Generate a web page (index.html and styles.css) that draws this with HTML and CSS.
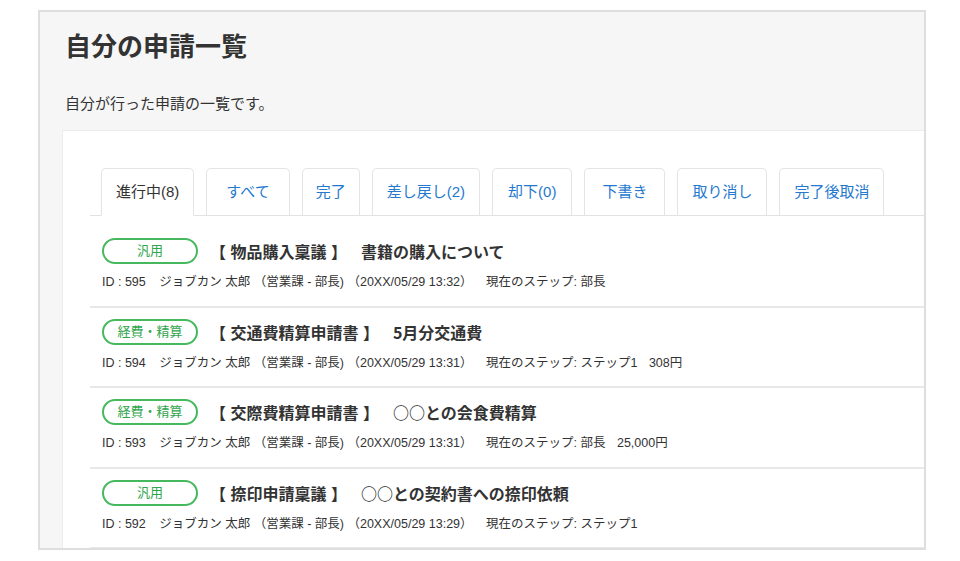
FILE: index.html
```html
<!DOCTYPE html>
<html lang="ja">
<head>
    <meta charset="UTF-8">
    <meta name="viewport" content="width=device-width, initial-scale=1.0">
    <title>自分の申請一覧</title>
    <link rel="stylesheet" href="styles.css">
</head>
<body>
    <div class="frame">
        <h1>自分の申請一覧</h1>
        <p class="lead">自分が行った申請の一覧です。</p>

        <div class="panel">
            <ul class="tabs">
                <li class="tab active">進行中(8)</li>
                <li class="tab">すべて</li>
                <li class="tab">完了</li>
                <li class="tab">差し戻し(2)</li>
                <li class="tab">却下(0)</li>
                <li class="tab">下書き</li>
                <li class="tab">取り消し</li>
                <li class="tab">完了後取消</li>
            </ul>

            <ul class="requests">
                <li class="request">
                    <div class="request-head">
                        <span class="badge">汎用</span>
                        <span class="form-name">【 物品購入稟議 】</span>
                        <span class="subject">書籍の購入について</span>
                    </div>
                    <div class="meta">
                        <span class="id">ID : 595</span>
                        <span>ジョブカン 太郎 （営業課 - 部長) （20XX/05/29 13:32）</span>
                        <span class="step">現在のステップ: 部長</span>
                    </div>
                </li>
                <li class="request">
                    <div class="request-head">
                        <span class="badge">経費・精算</span>
                        <span class="form-name">【 交通費精算申請書 】</span>
                        <span class="subject">5月分交通費</span>
                    </div>
                    <div class="meta">
                        <span class="id">ID : 594</span>
                        <span>ジョブカン 太郎 （営業課 - 部長) （20XX/05/29 13:31）</span>
                        <span class="step">現在のステップ: ステップ1</span>
                        <span class="amount">308円</span>
                    </div>
                </li>
                <li class="request">
                    <div class="request-head">
                        <span class="badge">経費・精算</span>
                        <span class="form-name">【 交際費精算申請書 】</span>
                        <span class="subject">○○との会食費精算</span>
                    </div>
                    <div class="meta">
                        <span class="id">ID : 593</span>
                        <span>ジョブカン 太郎 （営業課 - 部長) （20XX/05/29 13:31）</span>
                        <span class="step">現在のステップ: 部長</span>
                        <span class="amount">25,000円</span>
                    </div>
                </li>
                <li class="request">
                    <div class="request-head">
                        <span class="badge">汎用</span>
                        <span class="form-name">【 捺印申請稟議 】</span>
                        <span class="subject">○○との契約書への捺印依頼</span>
                    </div>
                    <div class="meta">
                        <span class="id">ID : 592</span>
                        <span>ジョブカン 太郎 （営業課 - 部長) （20XX/05/29 13:29）</span>
                        <span class="step">現在のステップ: ステップ1</span>
                    </div>
                </li>
            </ul>
        </div>
    </div>
</body>
</html>
```

FILE: styles.css
```css
body {
    font-family: 'Liberation Sans', 'Noto Sans CJK JP', sans-serif;
    color: #333;
    background-color: #fff;
    margin: 0;
    padding: 10px 0 0 38px;
}
.frame {
    width: 862px;
    height: 536px;
    background-color: #f6f6f6;
    border: 2px solid #dedede;
    padding: 0 0 0 22px;
    overflow: hidden;
}
h1 {
    font-size: 26px;
    font-weight: bold;
    line-height: 36px;
    margin: 17px 0 0 3px;
    color: #333;
}
.lead {
    font-size: 15px;
    line-height: 22px;
    margin: 28px 0 15px 3px;
}
.panel {
    background: white;
    border-top: 1px solid #ececec;
    border-left: 1px solid #ececec;
    padding: 37px 0 0 27px;
    height: 400px;
}
.tabs {
    display: flex;
    gap: 12px;
    list-style: none;
    margin: 0;
    padding: 0 0 0 11px;
    border-bottom: 1px solid #e2e2e2;
}
.tab {
    height: 46px;
    line-height: 46px;
    padding: 0 14px;
    margin-bottom: -1px;
    font-size: 15px;
    color: #2479cf;
    background: white;
    border: 1px solid #e4e4e4;
    border-bottom-color: #e2e2e2;
    border-radius: 5px 5px 0 0;
    white-space: nowrap;
}
.tab:nth-child(2) { padding: 0 19px; }
.tab:nth-child(3) { padding: 0 13px; }
.tab:nth-child(5) { padding: 0 15px; }
.tab:nth-child(6) { padding: 0 17px; }
.tab.active {
    color: #333;
    border-bottom-color: white;
}
.requests {
    list-style: none;
    margin: 11px 0 0;
    padding: 0;
}
.request {
    padding: 11px 0 13.5px 12px;
    border-bottom: 2px solid #e8e8e8;
}
.request-head {
    display: flex;
    align-items: center;
    height: 26px;
}
.badge {
    display: inline-block;
    width: 92px;
    height: 22px;
    line-height: 22px;
    text-align: center;
    border: 2px solid #46b95e;
    border-radius: 13px;
    color: #2fa54c;
    font-size: 13px;
    margin-right: 12px;
}
.form-name {
    font-size: 16px;
    font-weight: bold;
    margin-right: 14px;
}
.subject {
    font-family: 'Noto Sans CJK JP', sans-serif;
    font-size: 16px;
    font-weight: bold;
}
.meta {
    margin-top: 8px;
    font-size: 12.5px;
    line-height: 20px;
    white-space: nowrap;
}
.meta .id {
    margin-right: 10px;
}
.meta .step {
    margin-left: 10px;
}
.meta .amount {
    margin-left: 8px;
}
```
